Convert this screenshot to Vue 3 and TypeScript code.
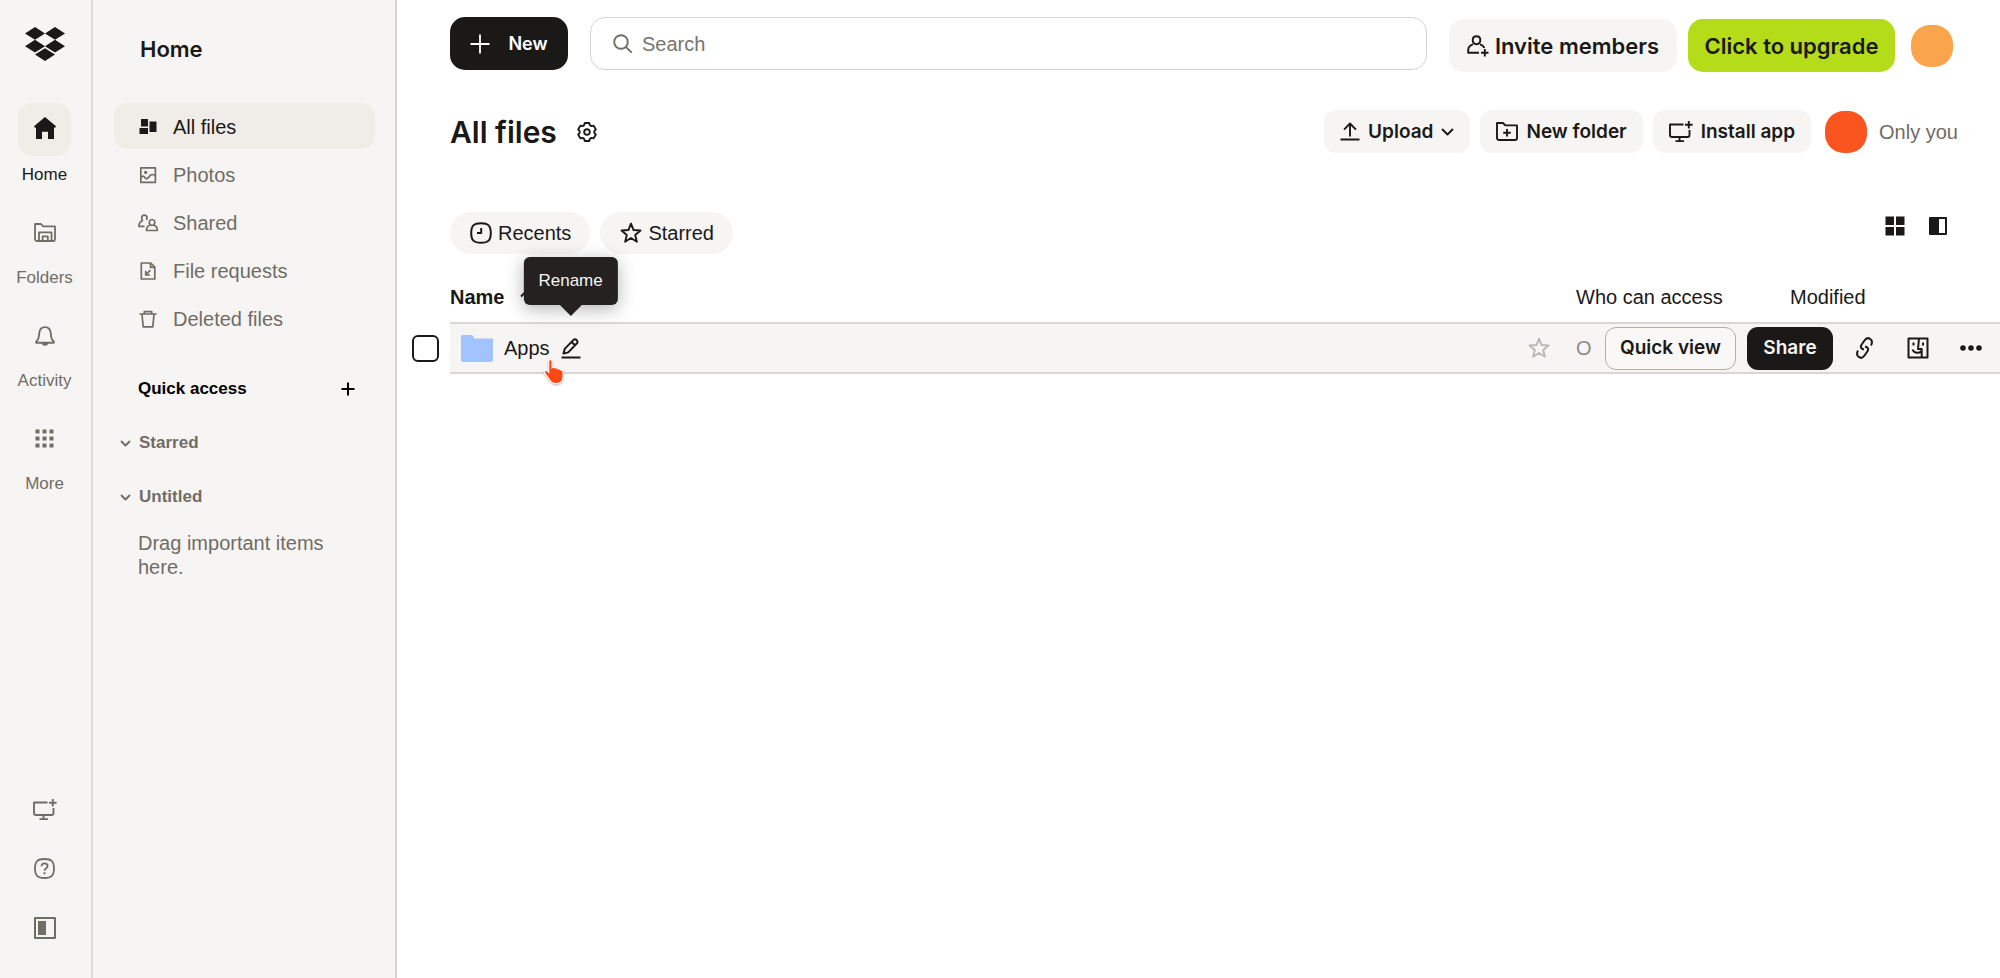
<script setup lang="ts">
import { h, ref } from 'vue'
import type { FunctionalComponent } from 'vue'

interface Glyph {
  w: number
  h: number
  line?: string
  solid?: string
  weight?: number
}

const round = (n: number): number => Math.round(n * 100) / 100

function polygon(points: [number, number][]): string {
  return 'M' + points.map(([x, y]) => `${round(x)} ${round(y)}`).join('L') + 'Z'
}

function polar(cx: number, cy: number, r: number, deg: number): [number, number] {
  const a = (deg * Math.PI) / 180
  return [cx + r * Math.cos(a), cy + r * Math.sin(a)]
}

const starPath = polygon(
  Array.from({ length: 10 }, (_, i) => polar(11, 11.6, i % 2 ? 4.4 : 10, -90 + i * 36)),
)

const gearPath = polygon(
  Array.from({ length: 6 }, (_, i) => -90 + i * 60).flatMap((a) => [
    polar(10, 10, 7.4, a - 23),
    polar(10, 10, 9.2, a - 14),
    polar(10, 10, 9.2, a + 14),
    polar(10, 10, 7.4, a + 23),
  ]),
)

const dotGrid = [0, 7, 14]
  .flatMap((y) => [0, 7, 14].map((x) => `M${x + 0.5} ${y + 0.5}h4v4h-4z`))
  .join('')

const monitor =
  'M14.5 3.5H1V14a2 2 0 0 0 2 2H18.5a2 2 0 0 0 2-2V9M10.5 16v4M6.5 20.2h8.5M19.8 0v7.6M16 3.8h7.6'

const glyphs: Record<string, Glyph> = {
  home: {
    w: 22, h: 25,
    solid: 'M11 0L22 9.2 21 11 20 10.3V22H14V14.7H8V22H2V10.3L1 11 0 9.2Z',
  },
  folders: {
    w: 22, h: 19, weight: 1.8,
    line: 'M1 1h6l2.3 2.4H21V16a2 2 0 0 1-2 2H3a2 2 0 0 1-2-2zM5 18V9.3H17.5V18M8.6 18v-4.6h5.2V18',
  },
  bell: {
    w: 20, h: 20, weight: 1.9,
    line: 'M1.2 16.8v-1.3C4 13.3 3.9 11 4.2 7.5 4.5 3.4 6.8 1.1 10 1.1s5.5 2.3 5.8 6.4c.3 3.5.2 5.8 3 8v1.3z',
    solid: 'M6.8 17a3.2 2.8 0 0 0 6.4 0z',
  },
  grid9: { w: 19, h: 19, solid: dotGrid },
  monitor: { w: 24, h: 21, weight: 1.9, line: monitor },
  help: {
    w: 21, h: 21, weight: 1.8,
    line: 'M10.5 1C17.5 1 20 3.5 20 10.5S17.5 20 10.5 20 1 17.5 1 10.5 3.5 1 10.5 1zM7.5 8.3c0-1.9 1.3-3 3-3s3.1 1.1 3.1 2.8c0 2.3-3.1 2.4-3.1 4.7',
    solid: 'M9.5 14.2h2v2h-2z',
  },
  panel: { w: 22, h: 22, weight: 2, line: 'M1 1h20v20H1z', solid: 'M4 4h8v14H4z' },
  allFiles: { w: 20, h: 18, solid: 'M3 1h7v7.5H3zM1.5 10h8.500v6H1.5zM11.5 3.500h7v10.500h-7z' },
  photos: {
    w: 20, h: 18, weight: 1.7,
    line: 'M2.8 1.8h14.6v14.6H2.8zM3 11.7c1.5-2 2.6-2 4 0s3 .6 4.5-1.5 3.5-2.4 5.7-.2',
    solid: 'M7.7 4.7a1.7 1.7 0 1 1 0 3.4 1.7 1.7 0 0 1 0-3.4z',
  },
  shared: {
    w: 20, h: 18, weight: 1.7,
    line: 'M5 6.8A3.2 3.2 0 0 1 3.700 4a2.600 2.800 0 0 1 5.300 0c0 .8-.2 1.500-.6 2M4.600 6.900C1.800 7.700.9 9.200.9 12.300H6.500M14 11.300a2.700 2.900 0 1 1 .1 0M12 11.200c-2.500.7-3.500 2.200-3.500 5.300H19.300c0-3.100-1-4.600-3.500-5.300',
  },
  request: {
    w: 20, h: 18, weight: 1.7,
    line: 'M3.3 1h9.5l4 4v12H3.300zM12.500 1.300v4h4M12.500 8.200L8 12.700M7.700 8.800V13H12',
  },
  trash: {
    w: 20, h: 18, weight: 1.7,
    line: 'M1.5 4h17M6.3 4V1.6h7.4V4M4 4.3l1.2 12.5h9.6L16 4.3',
  },
  plus: { w: 14, h: 14, weight: 2, line: 'M7 0.5v13M0.5 7h13' },
  plusLarge: { w: 20, h: 20, weight: 1.8, line: 'M10 0.5v19M0.5 10h19' },
  chevron: { w: 11, h: 7, weight: 1.9, line: 'M1 1l4.5 4.5L10 1' },
  chevronLarge: { w: 13, h: 8, weight: 1.9, line: 'M1 1l5.5 5.5L12 1' },
  search: { w: 20, h: 20, weight: 1.9, line: 'M8 1.2a6.8 6.8 0 1 1 0 13.6A6.8 6.8 0 0 1 8 1.200zM12.800 12.800L18.700 18.700' },
  gear: { w: 20, h: 20, weight: 1.9, line: gearPath + 'M10 7.2a2.800 2.800 0 1 1 0 5.600 2.800 2.800 0 0 1 0-5.600z' },
  invite: {
    w: 22, h: 22, weight: 1.9,
    line: 'M9.5 1.2c2.7 0 3.8 1.5 3.8 3.9S12 9.2 9.5 9.2 5.7 7.500 5.700 5.100 6.800 1.200 9.500 1.200zM6 9.300C2.500 10.400 1.200 12 1.200 15v2.800H12M13 9.300c2.600.9 3.800 2 4.300 3.700M17.800 14v7.500M14 17.800h7.500',
  },
  upload: { w: 20, h: 19, weight: 1.9, line: 'M10 14.5V1.5M4 7.7L10 1.5l6 6.2M.5 17.500h19' },
  newFolder: {
    w: 22, h: 19, weight: 1.9,
    line: 'M1 1h6l2.3 2.4H21V16a2 2 0 0 1-2 2H3a2 2 0 0 1-2-2zM11 7v7.6M7.2 10.8h7.6',
  },
  clock: {
    w: 22, h: 22, weight: 2,
    line: 'M11 1.2C18.3 1.2 20.8 3.7 20.8 11S18.3 20.8 11 20.8 1.2 18.3 1.2 11 3.7 1.2 11 1.2zM11.2 6v5H7',
  },
  star: { w: 22, h: 22, weight: 1.9, line: starPath },
  tiles: { w: 20, h: 20, solid: 'M.5.5h8.500v8.500H.5zM11 .5h8.500v8.500H11zM.5 11h8.500v8.500H.5zM11 11h8.500v8.500H11z' },
  split: { w: 18, h: 18, weight: 2, line: 'M1 1h16v16H1z', solid: 'M1 1h9v16H1z' },
  folder: { w: 32, h: 27, solid: 'M0 1.500Q0 0 1.500 0H10.500Q11.500 0 12 1L13 3.500H32V25Q32 27 30 27H2Q0 27 0 25Z' },
  pencil: {
    w: 20, h: 21, weight: 2,
    line: 'M2.500 15.600l1.200-4.700 8.800-9q1.700-1.300 3.200.2t.3 3.200L7.200 14.400zM10.600 4l3.300 3.300M.5 19.500h19',
  },
  link: {
    w: 17, h: 22, weight: 2,
    line: 'M15 8.500C16.500 5.500 16 3 14 1.800S10 1.300 8.500 3.500L5.500 7.800C4.200 10 5 12 8 12.600M2 13.500C.5 16.500 1 19 3 20.200S7 20.700 8.500 18.500L11.500 14.200C12.800 12 12 10 9 9.400',
  },
  finder: {
    w: 22, h: 22, weight: 2,
    line: 'M1.500 1.500h19v19h-19zM12 1.500L11 12h3.700v8.500M6.500 5.500v3M16 5.500v3M5.500 12.500c1.500 4 6.500 4.300 9 1.500',
  },
  dots: {
    w: 22, h: 6,
    solid: 'M3 .2a2.800 2.800 0 1 1 0 5.600A2.800 2.800 0 0 1 3 .2zM11 .2a2.800 2.800 0 1 1 0 5.600A2.800 2.800 0 0 1 11 .2zM19 .2a2.800 2.800 0 1 1 0 5.600A2.800 2.800 0 0 1 19 .2z',
  },
  sort: { w: 12, h: 14, weight: 1.9, line: 'M6 13V1.500M1 6.500l5-5 5 5' },
}

const Icon: FunctionalComponent<{ name: string }> = (props) => {
  const g = glyphs[props.name]
  return h('svg', { class: 'icon', width: g.w, height: g.h, viewBox: `0 0 ${g.w} ${g.h}`, 'aria-hidden': 'true' }, [
    g.line ? h('path', { d: g.line, fill: 'none', stroke: 'currentColor', 'stroke-width': g.weight, 'stroke-linejoin': 'round' }) : null,
    g.solid ? h('path', { d: g.solid, fill: 'currentColor' }) : null,
  ])
}
Icon.props = ['name']

const rail = [
  { label: 'Home', icon: 'home' },
  { label: 'Folders', icon: 'folders' },
  { label: 'Activity', icon: 'bell' },
  { label: 'More', icon: 'grid9' },
]
const railTools = [
  { label: 'Install desktop app', icon: 'monitor' },
  { label: 'Help', icon: 'help' },
  { label: 'Toggle sidebar', icon: 'panel' },
]
const nav = [
  { label: 'All files', icon: 'allFiles' },
  { label: 'Photos', icon: 'photos' },
  { label: 'Shared', icon: 'shared' },
  { label: 'File requests', icon: 'request' },
  { label: 'Deleted files', icon: 'trash' },
]
const sections = ['Starred', 'Untitled']
const query = ref('')
const picked = ref(false)
</script>

<template>
  <div class="app">
    <nav class="rail" aria-label="Product">
      <a class="logo" href="#" aria-label="Dropbox">
        <svg width="40" height="34" viewBox="0 0 40 34" aria-hidden="true">
          <path
            fill="currentColor"
            d="M10 0l10 6.4-10 6.4L0 6.4zM30 0l10 6.4-10 6.4L20 6.4zM10 12.8l10 6.4-10 6.4L0 19.2zM30 12.8l10 6.4-10 6.4L20 19.2zM20 21.2l10 6.4L20 34 10 27.6z"
          />
        </svg>
      </a>
      <a v-for="(item, i) in rail" :key="item.label" href="#" class="rail-item" :class="{ active: i === 0 }">
        <span class="rail-tile"><Icon :name="item.icon" /></span>
        <span class="rail-label">{{ item.label }}</span>
      </a>
      <div class="rail-tools">
        <button v-for="tool in railTools" :key="tool.icon" type="button" :aria-label="tool.label">
          <Icon :name="tool.icon" />
        </button>
      </div>
    </nav>

    <aside class="sidebar">
      <h2>Home</h2>
      <ul class="nav">
        <li v-for="(item, i) in nav" :key="item.label">
          <a href="#" :class="{ active: i === 0 }"><Icon :name="item.icon" />{{ item.label }}</a>
        </li>
      </ul>
      <div class="quick">
        <h3>Quick access</h3>
        <button type="button" aria-label="Add section"><Icon name="plus" /></button>
      </div>
      <button v-for="name in sections" :key="name" type="button" class="section">
        <Icon name="chevron" />{{ name }}
      </button>
      <p class="hint">Drag important items here.</p>
    </aside>

    <main class="main">
      <header class="topbar">
        <button type="button" class="new"><Icon name="plusLarge" />New</button>
        <label class="search">
          <Icon name="search" />
          <input v-model="query" type="search" placeholder="Search" aria-label="Search" />
        </label>
        <div class="account">
          <button type="button" class="invite"><Icon name="invite" />Invite members</button>
          <button type="button" class="upgrade">Click to upgrade</button>
          <button type="button" class="avatar" aria-label="Account"></button>
        </div>
      </header>

      <div class="titlebar">
        <h1>All files</h1>
        <button type="button" class="bare" aria-label="Folder settings"><Icon name="gear" /></button>
        <div class="actions">
          <button type="button" class="soft">
            <Icon name="upload" />Upload<Icon name="chevronLarge" />
          </button>
          <button type="button" class="soft"><Icon name="newFolder" />New folder</button>
          <button type="button" class="soft"><Icon name="monitor" />Install app</button>
          <span class="avatar member"></span>
          <span class="access-note">Only you</span>
        </div>
      </div>

      <div class="filters">
        <button type="button" class="pill"><Icon name="clock" />Recents</button>
        <button type="button" class="pill"><Icon name="star" />Starred</button>
        <div class="views">
          <button type="button" class="bare" aria-label="Grid view"><Icon name="tiles" /></button>
          <button type="button" class="bare" aria-label="Details pane"><Icon name="split" /></button>
        </div>
      </div>

      <table class="files">
        <thead>
          <tr>
            <td class="col-pick"></td>
            <th scope="col" class="col-name"><span class="sortable">Name <Icon name="sort" /></span></th>
            <th scope="col" class="col-access">Who can access</th>
            <th scope="col" class="col-modified">Modified</th>
          </tr>
        </thead>
        <tbody>
          <tr>
            <td class="col-pick">
              <input v-model="picked" type="checkbox" aria-label="Select Apps" />
            </td>
            <td class="cell">
              <div class="file">
                <span class="folder"><Icon name="folder" /></span>
                <a href="#">Apps</a>
                <span class="rename">
                  <button type="button" class="bare" aria-label="Rename Apps"><Icon name="pencil" /></button>
                  <span class="tooltip" role="tooltip">Rename</span>
                  <svg class="cursor" width="22" height="27" viewBox="0 0 22 27" aria-hidden="true">
                    <path
                      d="M6.3 2.2C6.3 1 8.5 1 8.5 2.200V10.500L9.200 9.300C10.200 8.300 11.700 8.600 11.900 9.900 12.900 9 14.500 9.500 14.700 10.700 15.800 10 17.300 10.500 17.500 11.700 18.700 11.300 19.500 12.200 19.500 13.500V17C19.500 21.500 17.300 24 13.500 24 9.800 24 8 22.500 6.200 19.500L2 13.600C1.200 12.200 3 11.200 4.300 12.600L6.300 14.700Z"
                    />
                  </svg>
                </span>
                <button type="button" class="bare favourite" aria-label="Star Apps"><Icon name="star" /></button>
              </div>
            </td>
            <td class="cell who">O</td>
            <td class="cell">
              <div class="row-actions">
                <button type="button" class="outline">Quick view</button>
                <button type="button" class="share">Share</button>
                <div class="tools">
                  <button type="button" aria-label="Copy link"><Icon name="link" /></button>
                  <button type="button" aria-label="Show in Finder"><Icon name="finder" /></button>
                  <button type="button" aria-label="More actions"><Icon name="dots" /></button>
                </div>
              </div>
            </td>
          </tr>
        </tbody>
      </table>
    </main>
  </div>
</template>

<style>
body {
  background: #fff;
}
</style>

<style scoped>
* {
  box-sizing: border-box;
}
.app {
  --ink: #1a1918;
  --muted: #706c66;
  --panel: #f7f5f3;
  --display: Inter, "Liberation Sans", sans-serif;
  display: flex;
  min-height: 100vh;
  color: var(--ink);
  font: 20px/24px "Liberation Sans", Arial, sans-serif;
}
.icon {
  display: block;
  flex: none;
}
button,
input {
  font: inherit;
  color: inherit;
  margin: 0;
}
button {
  display: flex;
  align-items: center;
  justify-content: center;
  padding: 0;
  border: 0;
  background: none;
  white-space: nowrap;
  cursor: pointer;
}
a {
  color: inherit;
  text-decoration: none;
}
h1,
h2,
h3,
p,
ul {
  margin: 0;
  padding: 0;
}

.rail {
  flex: 0 0 93px;
  display: flex;
  flex-direction: column;
  align-items: center;
  padding: 27px 2px 24px 0;
  background: var(--panel);
  border-right: 2px solid #dedcd9;
  color: var(--muted);
}
.logo {
  color: var(--ink);
  height: 34px;
  margin-bottom: 42px;
}
.rail-item {
  display: flex;
  flex-direction: column;
  align-items: center;
  gap: 9px;
  margin-bottom: 21px;
  font-size: 17px;
  line-height: 20px;
}
.rail-tile {
  display: grid;
  place-items: center;
  width: 53px;
  height: 53px;
  border-radius: 15px;
}
.active {
  color: var(--ink);
}
.active .rail-tile,
.nav .active {
  background: #f0ece7;
}
.rail-tools {
  display: flex;
  flex-direction: column;
  gap: 6px;
  margin-top: auto;
}
.rail-tools button {
  width: 53px;
  height: 53px;
}

.sidebar {
  flex: 0 0 304px;
  padding: 36px 20px 24px 21px;
  background: var(--panel);
  border-right: 2px solid #d6d4d1;
  color: var(--muted);
}
h2 {
  padding-left: 26px;
  font: 600 22px/26px var(--display);
  color: var(--ink);
}
.nav {
  list-style: none;
  display: flex;
  flex-direction: column;
  gap: 2px;
  margin-top: 41px;
}
.nav a {
  display: flex;
  align-items: center;
  gap: 15px;
  height: 46px;
  padding: 2px 0 0 24px;
  border-radius: 14px;
}
.quick {
  display: flex;
  align-items: center;
  justify-content: space-between;
  margin: 36px 20px 0 24px;
  color: #000;
}
h3 {
  font: bold 17px/24px "Liberation Sans", Arial, sans-serif;
}
.section {
  gap: 8px;
  margin: 30px 0 0 6px;
  font-size: 17px;
  font-weight: bold;
}
.hint {
  margin: 22px 40px 0 24px;
}

.main {
  flex: 1;
  min-width: 0;
}
.topbar {
  display: flex;
  align-items: flex-start;
  gap: 22px;
  padding: 17px 47px 0 53px;
}
.new {
  width: 118px;
  height: 53px;
  gap: 18px;
  border-radius: 15px;
  background: var(--ink);
  color: #fff;
  font: 600 18px/24px var(--display);
}
.search {
  flex: 1;
  display: flex;
  align-items: center;
  gap: 9px;
  height: 53px;
  padding: 0 22px;
  border: 1px solid #d6d4d2;
  border-radius: 15px;
  color: var(--muted);
}
.search input {
  flex: 1;
  min-width: 0;
  padding: 0;
  border: 0;
  outline: 0;
  background: none;
  appearance: none;
}
.search input::placeholder {
  color: #77736e;
  opacity: 1;
}
.account {
  display: flex;
  align-items: center;
  padding-top: 2px;
  font: 600 22px/24px var(--display);
}
.invite {
  width: 228px;
  height: 53px;
  gap: 6px;
  border-radius: 15px;
  background: var(--panel);
}
.upgrade {
  width: 207px;
  height: 53px;
  margin-left: 11px;
  border-radius: 15px;
  background: #b4dc19;
}
.avatar {
  width: 42px;
  height: 42px;
  margin-left: 16px;
  border-radius: 19px;
  background: #faa44b;
}

.titlebar {
  display: flex;
  align-items: center;
  margin-top: 38px;
  padding: 0 42px 0 53px;
}
h1 {
  font: 600 30px/36px var(--display);
  margin-right: 20px;
}
.actions {
  display: flex;
  align-items: center;
  gap: 10px;
  margin-left: auto;
}
.soft {
  height: 43px;
  gap: 8px;
  padding: 0 16px;
  border-radius: 12px;
  background: var(--panel);
  font: 600 19px/24px var(--display);
}
.member {
  margin-left: 4px;
  background: #fa551e;
}
.access-note {
  margin-left: 2px;
  color: var(--muted);
}

.filters {
  display: flex;
  align-items: center;
  gap: 10px;
  margin-top: 59px;
  padding: 0 53px;
}
.pill {
  height: 42px;
  gap: 6px;
  padding: 0 19px 0 20px;
  border-radius: 21px;
  background: var(--panel);
}
.views {
  display: flex;
  align-items: center;
  gap: 24px;
  margin: 0 0 14px auto;
}

.files {
  width: 100%;
  margin-top: 18px;
  border-collapse: separate;
  border-spacing: 0;
  table-layout: fixed;
}
td,
th {
  padding: 0;
  text-align: left;
  vertical-align: middle;
}
thead tr {
  height: 50px;
}
th {
  font-weight: normal;
}
.col-pick {
  width: 53px;
}
.col-access {
  width: 214px;
}
.col-modified {
  width: 210px;
}
.sortable {
  display: flex;
  align-items: center;
  gap: 16px;
  font-weight: bold;
}
tbody .col-pick {
  padding-left: 15px;
}
.col-pick input {
  display: block;
  width: 27px;
  height: 27px;
  appearance: none;
  border: 2px solid var(--ink);
  border-radius: 6px;
  background: #fff;
}
.cell {
  height: 52px;
  border: solid #d9d7d4;
  border-width: 2px 0;
  background: var(--panel);
}
.file {
  display: flex;
  align-items: center;
  gap: 11px;
  padding: 0 26px 0 11px;
}
.folder {
  color: #a2c3fe;
}
.rename {
  position: relative;
}
.tooltip {
  position: absolute;
  bottom: 54px;
  left: 50%;
  transform: translateX(-50%);
  padding: 12px 15px;
  border-radius: 6px;
  background: #242120;
  box-shadow: 0 4px 18px rgba(0, 0, 0, 0.3);
  color: #f7f5f3;
  font-size: 17px;
}
.tooltip::after {
  content: "";
  position: absolute;
  top: 100%;
  left: 50%;
  margin-left: -11px;
  border: solid transparent;
  border-width: 11px 11px 0;
  border-top-color: #242120;
}
.cursor {
  position: absolute;
  top: 21px;
  right: 16px;
  fill: #fb4814;
  stroke: #fff;
  stroke-width: 2;
  paint-order: stroke;
  filter: drop-shadow(0 1px 1px rgba(0, 0, 0, 0.3));
}
.favourite {
  margin-left: auto;
  color: #bbb8b4;
}
.who {
  color: #8e8a86;
}
.row-actions {
  display: flex;
  align-items: center;
  justify-content: flex-end;
  padding-right: 8px;
}
.outline,
.share {
  flex: none;
  height: 43px;
  border-radius: 11px;
  font: 600 19px/24px var(--display);
}
.outline {
  width: 131px;
  border: 1px solid #b3afa9;
  background: #f9f8f6;
}
.share {
  width: 86px;
  margin: 0 10px 0 11px;
  background: var(--ink);
  color: #f7f5f3;
}
.tools {
  display: flex;
  gap: 10px;
}
.tools button {
  width: 43px;
  height: 43px;
}
</style>
